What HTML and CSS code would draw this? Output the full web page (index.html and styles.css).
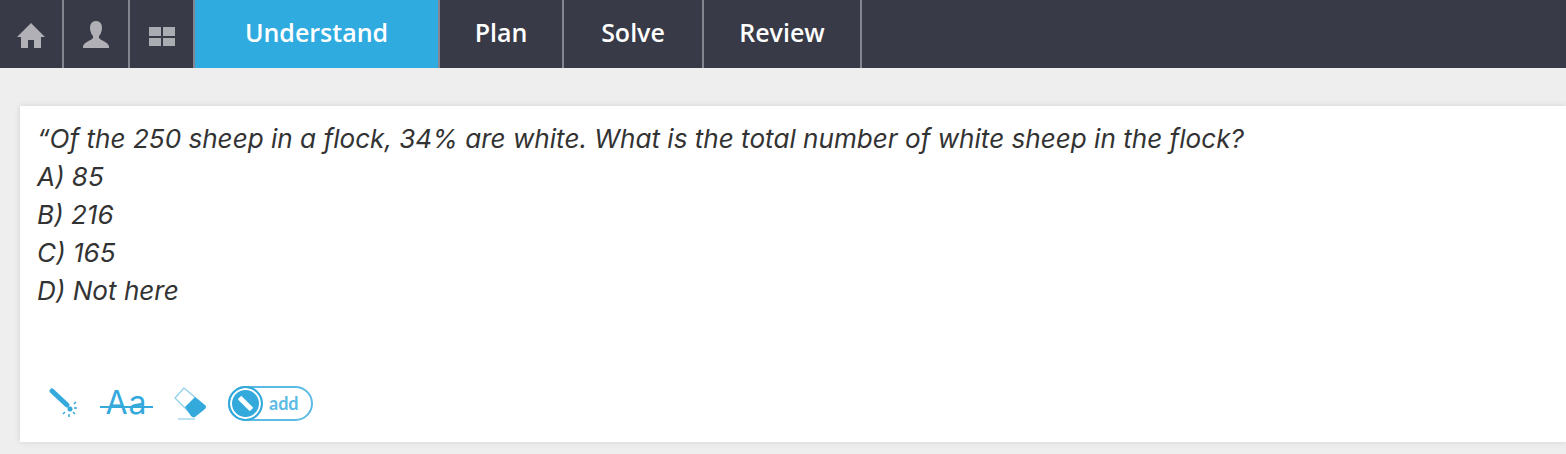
FILE: index.html
```html
<!DOCTYPE html>
<html lang="en">
<head>
    <meta charset="UTF-8">
    <title>Understand</title>
    <link rel="stylesheet" href="styles.css">
</head>
<body>

<nav class="topbar">
    <a class="nav-icon icon-first" href="#">
        <svg width="30" height="26" viewBox="0 0 30 26"><path d="M15 1 L29 15 H25 V26 H18 V18 H12 V26 H5 V15 H1 Z" fill="#b0b0b6"/></svg>
    </a>
    <a class="nav-icon icon-second" href="#">
        <svg width="28" height="28" viewBox="0 0 28 28"><path d="M14 0 C18 0 20 3 20 7 C20 11 18 14 17 15 V17 C19 20 27 21 27 26 V27 H1 V26 C1 21 9 20 11 17 V15 C10 14 8 11 8 7 C8 3 10 0 14 0 Z" fill="#b0b0b6"/></svg>
    </a>
    <a class="nav-icon icon-third" href="#">
        <svg width="26" height="20" viewBox="0 0 26 20"><g fill="#a9acb0"><rect x="0" y="0" width="12" height="9"/><rect x="14" y="0" width="12" height="9"/><rect x="0" y="11" width="12" height="8"/><rect x="14" y="11" width="12" height="8"/></g></svg>
    </a>
    <a class="nav-tab tab-understand active" href="#">Understand</a>
    <a class="nav-tab tab-plan" href="#">Plan</a>
    <a class="nav-tab tab-solve" href="#">Solve</a>
    <a class="nav-tab tab-review" href="#">Review</a>
</nav>

<section class="problem">
    <div class="problem-text">
        <p>“Of the 250 sheep in a flock, 34% are white. What is the total number of white sheep in the flock?</p>
        <p>A) 85</p>
        <p>B) 216</p>
        <p>C) 165</p>
        <p>D) Not here</p>
    </div>
    <div class="tools">
        <svg class="tool-pen" width="32" height="32" viewBox="0 0 32 32">
            <path d="M4 4 L19 18" stroke="#34a9dc" stroke-width="5" stroke-linecap="round"/>
            <circle cx="22" cy="22" r="2.5" fill="#34a9dc"/>
            <path d="M26 21 H29 M25 25 L27 27 M21 27 V30 M17 25 L15 27 M26 17 L28 15" stroke="#34a9dc" stroke-width="1.5"/>
        </svg>
        <span class="tool-strike">Aa</span>
        <svg class="tool-eraser" width="33" height="34" viewBox="0 0 33 34">
            <path d="M1 12 L10 2 L31 20 L19 30 Z" fill="#fff" stroke="#8fd0ec" stroke-width="1.2" stroke-linejoin="round"/>
            <path d="M11 21 L21 11 L32 20 Q32 22 31 23 L21 31 Q19 32 17 30 Z" fill="#34a9dc"/>
            <path d="M4 33 H21" stroke="#8fd0ec" stroke-width="1.2"/>
        </svg>
        <div class="toggle">
            <span class="toggle-knob"><span class="toggle-bar"></span></span>
            <span class="toggle-label">add</span>
        </div>
    </div>
</section>

</body>
</html>
```

FILE: styles.css
```css
body {
    margin: 0;
    padding: 0;
    height: 454px;
    overflow: hidden;
    background-color: #eeeeee;
    font-family: "Open Sans", sans-serif;
}
.topbar {
    display: flex;
    height: 68px;
    background-color: #383a47;
}
.nav-icon, .nav-tab {
    display: flex;
    align-items: center;
    justify-content: center;
    box-sizing: border-box;
    border-right: 2px solid #85858f;
    color: white;
    text-decoration: none;
}
.icon-first { width: 64px; padding-top: 2px; }
.icon-second { width: 66px; padding-top: 2px; }
.icon-third { width: 65px; padding-top: 5px; }
.nav-tab {
    font-size: 25px;
    font-weight: 600;
    padding-bottom: 4px;
}
.tab-understand { width: 245px; }
.tab-plan { width: 124px; }
.tab-solve { width: 140px; }
.tab-review { width: 158px; }
.active {
    background-color: #30abe0;
}
.problem {
    display: flex;
    flex-direction: column;
    justify-content: space-between;
    box-sizing: border-box;
    height: 336px;
    margin: 38px 0 0 20px;
    padding: 14px 0 21px 17px;
    background-color: white;
    box-shadow: 0 0 6px rgba(0, 0, 0, 0.12);
}
.problem-text p {
    margin: 0;
    font-family: Inter, "Open Sans", sans-serif;
    font-size: 26.1px;
    line-height: 38px;
    font-style: italic;
    color: #333333;
}
.tools {
    display: flex;
    align-items: center;
    margin-left: 11px;
}
.tool-strike {
    box-sizing: border-box;
    width: 53px;
    margin-left: 20px;
    font-family: Inter, "Open Sans", sans-serif;
    font-size: 32px;
    font-weight: 400;
    letter-spacing: 1px;
    line-height: 36px;
    text-align: center;
    color: #34a9dc;
    background: linear-gradient(#34a9dc, #34a9dc) center 62% / 100% 2px no-repeat;
}
.tool-eraser {
    margin-left: 21px;
}
.toggle {
    display: flex;
    align-items: center;
    box-sizing: border-box;
    width: 85px;
    height: 35px;
    margin-left: 21px;
    border: 2px solid #5cbbe5;
    border-radius: 18px;
    background-color: white;
}
.toggle-knob {
    display: flex;
    align-items: center;
    justify-content: center;
    box-sizing: border-box;
    width: 35px;
    height: 35px;
    margin-left: -2px;
    border: 2px solid #34a9dc;
    border-radius: 50%;
    background-color: #34a9dc;
    box-shadow: inset 0 0 0 2px white;
}
.toggle-bar {
    width: 17px;
    height: 5px;
    border-radius: 1px;
    background-color: white;
    transform: rotate(45deg);
}
.toggle-label {
    margin-left: 6px;
    font-family: Lato, sans-serif;
    font-size: 18px;
    font-weight: 700;
    color: #5cbbe5;
}
```
